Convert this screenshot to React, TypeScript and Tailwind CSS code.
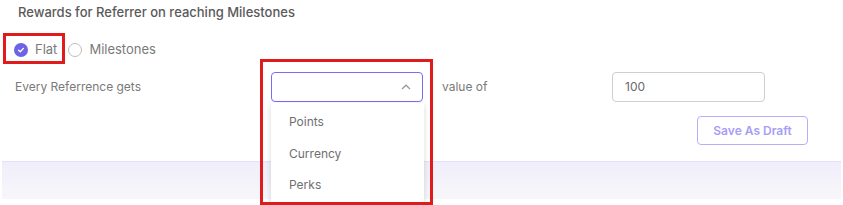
import React, { useState } from 'react';

const options = ['Points', 'Currency', 'Perks'];

const App = () => {
  const [mode, setMode] = useState<'flat' | 'milestones'>('flat');
  const [value, setValue] = useState('100');

  return (
    <div className="relative w-[843px] h-[205px] bg-white overflow-hidden font-['Inter',sans-serif]">
      <div className="pl-[18px] text-[13px] font-medium text-[#5a5a5a] h-[26px] flex items-center">
        Rewards for Referrer on reaching Milestones
      </div>

      {/* reward type */}
      <div className="flex items-center h-[30px] mt-[9px] pl-[14px] text-[13px] text-[#7a7a7a]">
        <button onClick={() => setMode('flat')} className="flex items-center gap-[7px]">
          <span className={`w-[14px] h-[14px] rounded-full flex items-center justify-center ${mode === 'flat' ? 'bg-[#6c63e6]' : 'border border-[#bdbdbd]'}`}>
            {mode === 'flat' && (
              <svg width="8" height="8" viewBox="0 0 8 8">
                <path d="M1.6 4.2 L3.3 5.8 L6.4 2.4" fill="none" stroke="white" strokeWidth="1.4" strokeLinecap="round" strokeLinejoin="round" />
              </svg>
            )}
          </span>
          Flat
        </button>
        <button onClick={() => setMode('milestones')} className="flex items-center gap-[7px] ml-[11px]">
          <span className={`w-[14px] h-[14px] rounded-full flex items-center justify-center ${mode === 'milestones' ? 'bg-[#6c63e6]' : 'border border-[#bdbdbd]'}`} />
          Milestones
        </button>
      </div>

      {/* amount row */}
      <div className="flex items-center mt-[6px] h-[31px] text-[12px] text-[#7a7a7a]">
        <div className="pl-[15px] w-[271px]">Every Referrence gets</div>
        <div className="relative">
          <div className="w-[152px] h-[30px] border border-[#7b6cf6] rounded-[4px] flex items-center justify-end pr-[11px]">
            <svg width="10" height="6" viewBox="0 0 10 6">
              <path d="M1 5 L5 1.2 L9 5" fill="none" stroke="#9a9a9a" strokeWidth="1.2" />
            </svg>
          </div>
          <ul className="absolute left-0 top-[31px] w-[153px] h-[110px] bg-white shadow-[0_2px_6px_rgba(0,0,0,0.15)] pt-[4px] z-10">
            {options.map((o) => (
              <li key={o} className="h-[31.5px] flex items-center pl-[18px] text-[12px] text-[#6f6f6f]">{o}</li>
            ))}
          </ul>
        </div>
        <div className="pl-[19px] w-[189px]">value of</div>
        <input
          value={value}
          onChange={(e) => setValue(e.target.value)}
          className="w-[153px] h-[30px] border border-[#cfcfcf] rounded-[4px] px-[12px] text-[12px] text-[#6a6a6a] outline-none"
        />
      </div>

      <div className="flex justify-end pr-[35px] mt-[14px]">
        <button className="w-[111px] h-[29px] border border-[#b8aff8] rounded-[4px] text-[12px] font-semibold text-[#a89ef5]">
          Save As Draft
        </button>
      </div>

      <div className="mt-[16px] mx-[2px] h-[38px] border-t border-[#e3e0fa] bg-gradient-to-b from-[#f0eefb] to-[#f7f7fa]" />

      {/* annotation boxes */}
      <div className="absolute left-[3px] top-[33px] w-[62px] h-[31px] border-[3px] border-[#e01b1b] pointer-events-none" />
      <div className="absolute left-[260px] top-[59px] w-[173px] h-[146px] border-[3px] border-[#e01b1b] pointer-events-none z-20" />
    </div>
  );
};

export default App;
